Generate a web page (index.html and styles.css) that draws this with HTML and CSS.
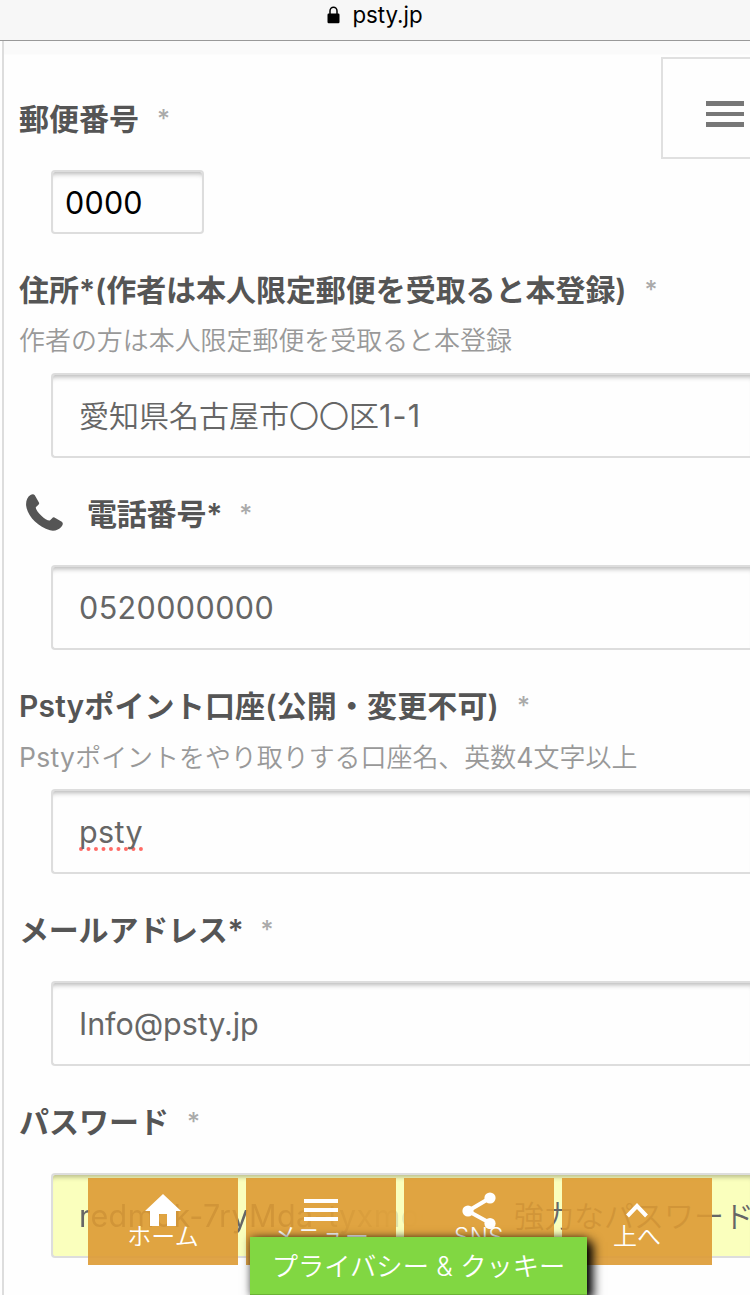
FILE: index.html
```
<!DOCTYPE html>
<html lang="ja">
<head>
	<meta charset="UTF-8">
	<title>psty.jp</title>
	<link rel="stylesheet" href="styles.css">
</head>
<body>
	<div class="addressBar">
		<svg class="lock" viewBox="0 0 13 18"><path d="M3 9V5a3.500 3.700 0 0 1 7 0V9" fill="none" stroke="#000" stroke-width="1.500"/><rect x="0.5" y="7.600" width="12" height="9.600" rx="1.200"/></svg>
		<span>psty.jp</span>
	</div>
	<div class="menuButton">
		<span class="bar"></span>
		<span class="bar"></span>
		<span class="bar"></span>
	</div>
	<form class="page">
		<div class="field">
			<div class="label"><span>郵便番号</span><span class="required">*</span></div>
			<div class="box latin zip">0000</div>
		</div>
		<div class="field">
			<div class="label"><span class="address">住所*(作者は本人限定郵便を受取ると本登録)</span><span class="required">*</span></div>
			<div class="hint">作者の方は本人限定郵便を受取ると本登録</div>
			<div class="box">愛知県名古屋市〇〇区<span class="latin lot">1-1</span></div>
		</div>
		<div class="field">
			<div class="label">
				<svg class="phone" viewBox="0 0 37 37"><path d="M4.5 1C6 .1 7.800 0 8.800 1.200L13.200 9C13.400 10.500 11 11.500 9.800 13.300C9.500 17 19.500 27 23.800 26.600C25.500 25.500 26.500 23.200 28 23.300L35.800 27.800C37.400 29 36.900 30.800 35.800 32.300C33 36 28 37.600 24 36.300C12 33 1.500 22 .2 12C-.4 7.500 1.200 3 4.500 1Z"/></svg>
				<span class="starred">電話番号*</span><span class="required">*</span>
			</div>
			<div class="box latin">0520000000</div>
		</div>
		<div class="field">
			<div class="label"><span class="point">Pstyポイント口座(公開・変更不可)</span><span class="required">*</span></div>
			<div class="hint"><span class="hintLatin">Psty</span>ポイントをやり取りする口座名、英数<span class="hintLatin">4</span>文字以上</div>
			<div class="box latin"><span class="misspelled">psty</span></div>
		</div>
		<div class="field">
			<div class="label"><span class="starred">メールアドレス*</span><span class="required">*</span></div>
			<div class="box latin email">Info@psty.jp</div>
		</div>
		<div class="field">
			<div class="label"><span>パスワード</span><span class="required">*</span></div>
			<div class="box autofill"><span class="generated latin">redmok-7ryMda-tyxmoc</span><span class="strong">強力なパスワード</span></div>
		</div>
	</form>
	<div class="footerNav">
		<div class="navItem">
			<svg class="home" viewBox="0 0 36 32"><path d="M18 0L36 17H31V32H22V20H14V32H5V17H0Z"/></svg>
			<span>ホーム</span>
		</div>
		<div class="navItem">
			<svg class="menu" viewBox="0 0 34 32"><path d="M0 5h34v4H0zM0 14h34v4H0zM0 23h34v4H0z"/></svg>
			<span>メニュー</span>
		</div>
		<div class="navItem">
			<svg class="share" viewBox="0 0 34 37"><path d="M28 6L6 19L28 31" fill="none" stroke="#fff" stroke-width="4"/><circle cx="28" cy="6" r="5.600"/><circle cx="6" cy="19" r="5.600"/><circle cx="28" cy="31.500" r="5.600"/></svg>
			<span class="sns">SNS</span>
		</div>
		<div class="navItem">
			<svg class="up" viewBox="0 0 22 32"><path d="M1.500 22L11 12L20.500 22" fill="none" stroke="#fff" stroke-width="4"/></svg>
			<span>上へ</span>
		</div>
	</div>
	<div class="privacy">プライバシー &amp; クッキー</div>
</body>
</html>
```
FILE: styles.css
```
body {
	margin: 0;
	height: 1295px;
	overflow: hidden;
	position: relative;
	background-color: #fefefe;
	font-family: Inter, "Noto Sans CJK JP", sans-serif;
}
.addressBar {
	display: flex;
	justify-content: center;
	box-sizing: border-box;
	height: 41px;
	background-color: #f7f7f7;
	border-bottom: 1px solid #999;
	font-size: 22.3px;
	line-height: 30px;
	gap: 12px;
	color: #000;
}
.lock {
	width: 13px;
	height: 18px;
	margin-top: 6px;
}
.page {
	box-sizing: border-box;
	height: 1254px;
	margin-left: 2px;
	padding: 60px 0 0 15px;
	border-left: 2px solid #ddd;
	background: linear-gradient(#fafafa 13px, #fefefe 14px);
}
.field {
	margin-bottom: 38px;
}
.label {
	display: flex;
	height: 36px;
	margin-bottom: 33px;
	line-height: 36px;
	font-size: 30px;
	font-weight: 600;
	color: #555;
	white-space: nowrap;
}
.address {
	letter-spacing: -0.05px;
}
.point {
	letter-spacing: 0.15px;
}
.starred {
	letter-spacing: -0.2px;
}
.required {
	margin-left: 18px;
	font-weight: 500;
	font-size: 25px;
	color: #aaa;
}
.starred + .required {
	margin-left: 17px;
}
.hint {
	height: 32px;
	margin: -16px 0 16px;
	line-height: 32px;
	font-size: 25.95px;
	font-weight: 350;
	color: #999;
	white-space: nowrap;
}
.hintLatin {
	font-size: 26.5px;
	font-weight: 400;
	letter-spacing: 0.3px;
}
.phone {
	width: 37px;
	height: 37px;
	margin: -2px 24px 0 7px;
	fill: #555;
}
.box {
	box-sizing: border-box;
	height: 85px;
	margin-left: 32px;
	padding-left: 26px;
	border: 2px solid #ddd;
	border-right: none;
	border-radius: 4px 0 0 4px;
	box-shadow: inset 0 6px 5px -4px rgba(0, 0, 0, 0.28);
	font-size: 30px;
	font-weight: 350;
	line-height: 82px;
	color: #666;
	white-space: nowrap;
	overflow: hidden;
}
.latin {
	font-size: 30.500px;
	font-weight: 400;
	letter-spacing: 0.4px;
}
.lot {
	letter-spacing: 1.2px;
}
.email {
	letter-spacing: -0.05px;
}
.zip {
	width: 153px;
	height: 64px;
	padding-left: 12px;
	border-right: 2px solid #ddd;
	border-radius: 4px;
	line-height: 61px;
	letter-spacing: 0.2px;
	color: #000;
}
.misspelled {
	text-decoration: underline dotted #ff6b66 4px;
	text-underline-offset: 4px;
	text-decoration-skip-ink: none;
}
.autofill {
	display: flex;
	background-color: #faffbd;
}
.generated {
	flex-shrink: 0;
	width: 435px;
	-webkit-mask-image: linear-gradient(90deg, #000 200px, transparent 345px);
	mask-image: linear-gradient(90deg, #000 200px, transparent 345px);
}
.menuButton {
	position: absolute;
	top: 57px;
	left: 661px;
	display: flex;
	flex-direction: column;
	gap: 6px;
	box-sizing: border-box;
	width: 89px;
	height: 102px;
	padding: 42px 0 0 43px;
	border: 2px solid #e0e0e0;
	border-right: none;
}
.bar {
	width: 38px;
	height: 4.500px;
	background-color: #777;
}
.footerNav {
	position: absolute;
	top: 1178px;
	left: 88px;
	display: flex;
	gap: 8px;
}
.navItem {
	display: flex;
	flex-direction: column;
	align-items: center;
	width: 150px;
	height: 87px;
	background-color: rgba(221, 154, 51, 0.9);
	color: #fff;
	font-size: 24px;
	font-weight: 350;
	line-height: 22px;
}
.navItem svg {
	margin-top: 16px;
	fill: #fff;
}
.home {
	width: 36px;
	height: 32px;
}
.menu {
	width: 34px;
	height: 32px;
}
.share {
	width: 34px;
	height: 37px;
}
.navItem .share {
	margin: 14px 0 -3px;
}
.sns {
	letter-spacing: 0.5px;
}
.up {
	width: 22px;
	height: 32px;
}
.privacy {
	position: absolute;
	top: 1237px;
	left: 250px;
	box-sizing: border-box;
	width: 337px;
	height: 58px;
	border-bottom: 1px solid #6bb237;
	background-color: #81d742;
	box-shadow: 6px 5px 10px #000, 0 0 8px rgba(0, 0, 0, 0.5);
	color: #fff;
	font-size: 26.3px;
	font-weight: 350;
	line-height: 60px;
	text-align: center;
	white-space: nowrap;
}
```
